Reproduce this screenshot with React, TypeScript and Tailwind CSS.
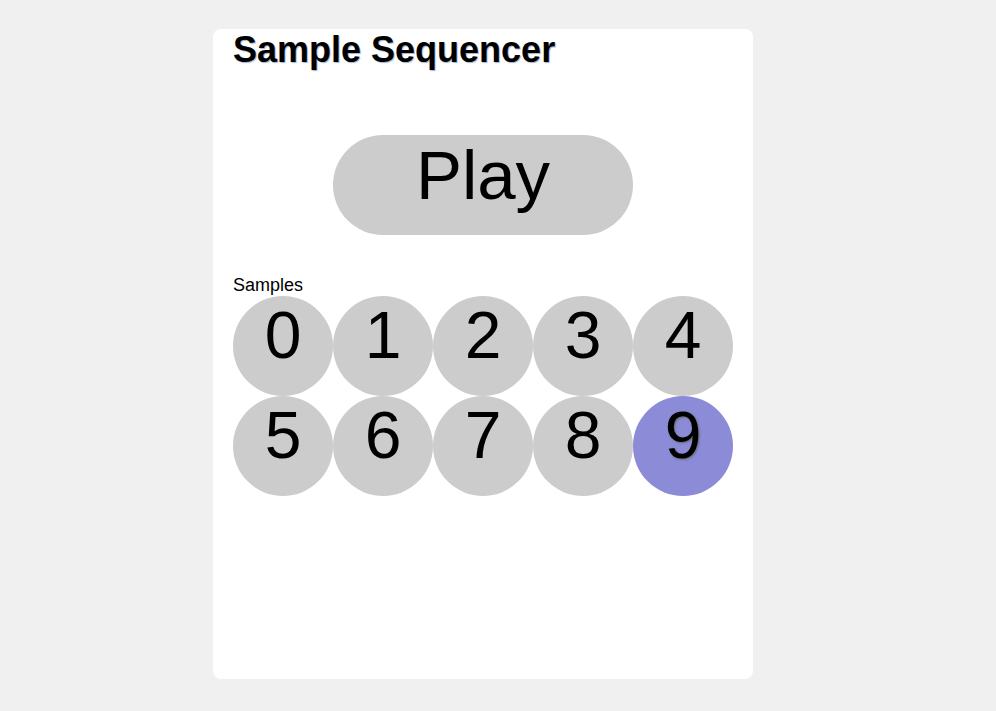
const samples = [0, 1, 2, 3, 4, 5, 6, 7, 8, 9];
const selected = 9;

export default function App() {
  return (
    <div className="min-h-[711px] bg-[#f0f0f0] pt-[29px] pl-[213px] font-['Liberation_Sans',Arial,sans-serif] text-black">
      <div className="h-[650px] w-[540px] rounded-[8px] bg-white px-[20px]">
        <h1 className="text-[36px] font-bold leading-[41px] [text-shadow:1px_1px_1px_#a3b3cc]">
          Sample Sequencer
        </h1>

        <div className="mt-[65px] flex justify-center">
          <button className="flex h-[100px] w-[300px] items-start justify-center rounded-full bg-[#cccccc] pt-[6px] text-[69px] leading-none">
            Play
          </button>
        </div>

        <div className="mt-[39px] text-[18px] leading-[22px]">Samples</div>
        <div className="grid grid-cols-[repeat(5,100px)]">
          {samples.map((n) => (
            <button
              key={n}
              className={
                n === selected
                  ? 'flex h-[100px] w-[100px] items-start justify-center rounded-full bg-[#8b8bd8] pt-[6px] text-[66px] leading-none [text-shadow:1px_1px_2px_#666]'
                  : 'flex h-[100px] w-[100px] items-start justify-center rounded-full bg-[#cccccc] pt-[6px] text-[66px] leading-none'
              }
            >
              {n}
            </button>
          ))}
        </div>
      </div>
    </div>
  );
}
